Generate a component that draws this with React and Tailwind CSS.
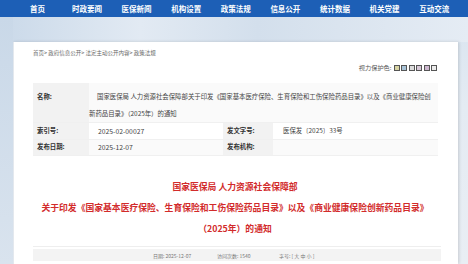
export default function App() {
  const nav = ["首页", "时政要闻", "医保新闻", "机构设置", "政策法规", "信息公开", "统计数据", "机关党建", "互动交流"];
  const font = { fontFamily: '"Noto Sans CJK SC", "Noto Sans", sans-serif' };
  return (
    <div className="w-[468px] h-[264px] overflow-hidden relative bg-[linear-gradient(180deg,#d7e3ef_0%,#e4ebf3_40%,#e9eef4_100%)]" style={font}>
      <div className="h-[17px] bg-[#1d5fb6] flex items-center pl-[30px]">
        {nav.map((n, i) => (
          <div key={i} className={`${i === 0 ? "w-[42px]" : "w-[49.6px]"} shrink-0 text-white font-bold text-[7.5px] leading-none text-left`}>
            {n}
          </div>
        ))}
      </div>
      <div className="h-[25px] bg-[linear-gradient(90deg,#cad9e9_0%,#e2eaf3_30%,#d3dfec_55%,#e5ecf4_100%)]" />
      <div className="absolute left-0 top-[17px] w-[13px] h-[247px] bg-[linear-gradient(180deg,#c9d8e8,#d9e3ee)]" />
      <div className="ml-[13px] w-[445px] h-[222px] bg-white shadow-[1px_0_3px_rgba(0,0,0,0.15)] border-l border-[#e3e8ee] pl-[19px] pr-[21px]">
        <div className="pt-[9px] text-[5.5px] leading-none text-[#666]">首页&gt; 政府信息公开&gt; 法定主动公开内容&gt; 政策法规</div>
        <div className="mt-[8px] flex justify-end items-center">
          <div className="text-[6.2px] text-[#555] leading-none mr-[2px]">视力保护色:</div>
          <div className="w-[6px] h-[6px] border border-[#555] bg-[#d8d4a4] mr-[1.5px]" />
          <div className="w-[6px] h-[6px] border border-[#555] bg-[#a9c4d8] mr-[1.5px]" />
          <div className="w-[6px] h-[6px] border border-[#555] bg-[#dcdcdc] mr-[1.5px]" />
          <div className="w-[6px] h-[6px] border border-[#555] bg-[#d9cad9] mr-[1.5px]" />
          <div className="w-[6px] h-[6px] border border-[#555] bg-[#cdb7cf] mr-[1.5px]" />
          <div className="w-[6px] h-[6px] border border-[#555] bg-[#ececec]" />
        </div>
        <div className="mt-[12px] w-[405px] text-[6.4px] text-[#444]">
          <div className="flex bg-[#fafafa]">
            <div className="w-[56px] shrink-0 bg-[#f2f2f2] pl-[4px] pt-[5px] font-bold text-[#333] leading-[17px]">名称:</div>
            <div className="flex-1 pt-[5px] leading-[17px] pr-[1px] whitespace-nowrap">
              <div className="pl-[8px]">国家医保局 人力资源社会保障部关于印发《国家基本医疗保险、生育保险和工伤保险药品目录》以及《商业健康保险创</div>
              <div>新药品目录》（2025年）的通知</div>
            </div>
          </div>
          <div className="flex bg-white h-[17px] items-center border-t border-[#f0f0f0]">
            <div className="w-[56px] h-full flex items-center shrink-0 bg-[#f2f2f2] pl-[4px] font-bold text-[#333]">索引号:</div>
            <div className="w-[134px] pl-[9px] text-[6.8px]">2025-02-00027</div>
            <div className="w-[50px] h-full flex items-center shrink-0 bg-[#f2f2f2] pl-[4px] font-bold text-[#333]">发文字号:</div>
            <div className="flex-1 pl-[10px]">医保发〔2025〕33号</div>
          </div>
          <div className="flex bg-[#fafafa] h-[17px] items-center border-t border-b border-[#f0f0f0]">
            <div className="w-[56px] h-full flex items-center shrink-0 bg-[#f2f2f2] pl-[4px] font-bold text-[#333]">发布日期:</div>
            <div className="w-[134px] pl-[9px] text-[6.8px]">2025-12-07</div>
            <div className="w-[50px] h-full flex items-center shrink-0 bg-[#f2f2f2] pl-[4px] font-bold text-[#333]">发布机构:</div>
            <div className="flex-1"></div>
          </div>
        </div>
        <div className="mt-[27px] text-center text-[#d22b2b] font-bold text-[8.8px] leading-none">
          <div>国家医保局 人力资源社会保障部</div>
          <div className="mt-[12px]">关于印发《国家基本医疗保险、生育保险和工伤保险药品目录》以及《商业健康保险创新药品目录》</div>
          <div className="mt-[13px]">（2025年）的通知</div>
        </div>
        <div className="mt-[12px] w-[408px] border-t border-[#eeeeee] pt-[2px]">
          <div className="h-[12px] bg-[#f3f3f3] flex items-center text-[5px] text-[#777] leading-none pl-[120px]">
            <span className="w-[64px]">日期: 2025-12-07</span>
            <span className="w-[62px]">访问次数: 1540</span>
            <span>字号: [ 大 中 小 ]</span>
          </div>
        </div>
      </div>
    </div>
  );
}
